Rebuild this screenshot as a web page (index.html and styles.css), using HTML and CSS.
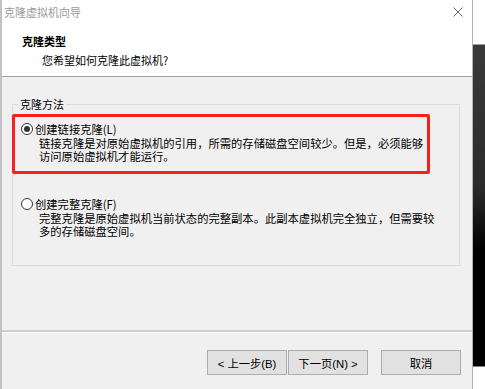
FILE: index.html
```html
<!DOCTYPE html>
<html>

<head>
  <meta charset="utf-8">
  <title>克隆虚拟机向导</title>
  <link rel="stylesheet" href="styles.css">
</head>

<body>
  <div class="screen">
    <div class="dialog">
      <div class="titleBar">
        <span class="titleText">克隆虚拟机向导</span>
        <svg class="closeIcon" width="10" height="10" viewBox="0 0 10 10">
          <path d="M0.5 0.5L9.5 9.5M9.5 0.5L0.5 9.5" stroke="#6b6b6b" stroke-width="1" fill="none"></path>
        </svg>
      </div>

      <div class="header">
        <div class="headerTitle">克隆类型</div>
        <div class="headerSub">您希望如何克隆此虚拟机?</div>
      </div>

      <div class="content">
        <fieldset class="groupBox">
          <legend>克隆方法</legend>

          <div class="option first">
            <div class="optionRow"><span class="radio checked"></span><span>创建链接克隆(L)</span></div>
            <div class="optionDesc">链接克隆是对原始虚拟机的引用，所需的存储磁盘空间较少。但是，必须能够<br>访问原始虚拟机才能运行。</div>
          </div>

          <div class="option second">
            <div class="optionRow"><span class="radio"></span><span>创建完整克隆(F)</span></div>
            <div class="optionDesc">完整克隆是原始虚拟机当前状态的完整副本。此副本虚拟机完全独立，但需要较<br>多的存储磁盘空间。</div>
          </div>

          <!-- red annotation box drawn over the first option -->
          <div class="highlight"></div>
        </fieldset>
      </div>

      <div class="separator"></div>

      <div class="buttonBar">
        <button type="button" class="wizButton">&lt; 上一步(B)</button>
        <button type="button" class="wizButton">下一页(N) &gt;</button>
        <button type="button" class="wizButton cancel">取消</button>
      </div>
    </div>

    <div class="desktop"></div>
  </div>
</body>

</html>
```

FILE: styles.css
```css
body {
  margin: 0;
  font-family: "Noto Sans CJK SC", "Liberation Sans", sans-serif;
  font-size: 11.3px;
  color: #000000;
  background: #ffffff;
}

.screen {
  display: flex;
  width: 485px;
  height: 389px;
  overflow: hidden;
}

.dialog {
  width: 470px;
  height: 389px;
  display: flex;
  flex-direction: column;
  background: #f0f0f0;
  border-left: 2px solid #c2c2c2;
  border-right: 1px solid #b4b4b4;
}

.desktop {
  flex: 1;
  background: linear-gradient(to bottom, #ffffff 0px, #ffffff 44px, #3a3a3a 45px, #2a2a2a 190px, #000000 250px, #000000 366px, #ffffff 367px);
}

.titleBar {
  height: 22px;
  display: flex;
  align-items: center;
  justify-content: space-between;
  background: #ffffff;
  padding: 0 8px 0 2px;
}

.titleText {
  color: #9a9a9a;
  font-size: 11px;
  line-height: 16px;
  margin-top: 2px;
}

.closeIcon {
  margin-top: 2px;
  margin-right: 1px;
}

.header {
  height: 55px;
  box-sizing: border-box;
  background: #ffffff;
  border-bottom: 1px solid #a0a0a0;
  padding-top: 11px;
}

.headerTitle {
  padding-left: 20px;
  font-size: 11px;
  font-weight: bold;
  line-height: 16px;
}

.headerSub {
  padding-left: 40px;
  margin-top: 3px;
  font-size: 11px;
  line-height: 16px;
}

.content {
  height: 253px;
  box-sizing: border-box;
  padding: 19px 0 0 10px;
}

.groupBox {
  position: relative;
  width: 448px;
  box-sizing: border-box;
  margin: 0;
  padding: 0 0 27px 5px;
  border: 1px solid #dcdcdc;
}

.groupBox legend {
  padding: 0 2px;
  font-size: 11px;
  line-height: 16px;
}

.option.first {
  margin-top: 9px;
}

.option.second {
  margin-top: 33px;
}

.optionRow {
  display: flex;
  align-items: center;
  height: 16px;
  margin-left: 3px;
}

.radio {
  width: 10px;
  height: 10px;
  border: 1px solid #333333;
  border-radius: 50%;
  background: #ffffff;
  margin-right: 2px;
  position: relative;
}

.radio.checked::after {
  content: "";
  position: absolute;
  left: 2px;
  top: 2px;
  width: 6px;
  height: 6px;
  border-radius: 50%;
  background: #333333;
}

.optionDesc {
  margin-left: 21px;
  line-height: 13px;
  white-space: nowrap;
}

.highlight {
  position: absolute;
  left: -1px;
  top: 2px;
  width: 412px;
  height: 54px;
  border: 3px solid #f7201a;
  border-radius: 2px;
}

.separator {
  height: 2px;
  background: #cbcbcb;
  border-bottom: 1px solid #ffffff;
}

.buttonBar {
  display: flex;
  justify-content: flex-end;
  padding: 17px 11px 0 0;
}

.wizButton {
  width: 80px;
  height: 25px;
  margin: 0 0 0 1px;
  padding: 0;
  font-family: "Liberation Sans", "Noto Sans CJK SC", sans-serif;
  font-size: 11.3px;
  color: #000000;
  background: #e1e1e1;
  border: 1px solid #adadad;
}

.wizButton.cancel {
  margin-left: 13px;
}
```
